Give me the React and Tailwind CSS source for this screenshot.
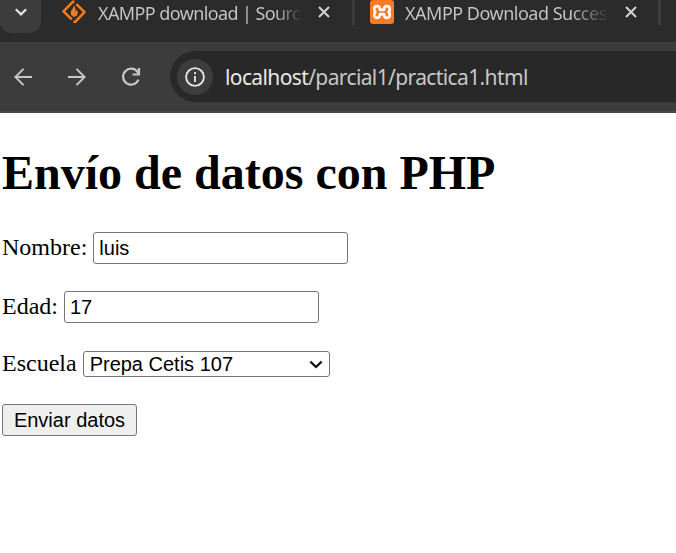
import React from "react";

const uiFont = "font-['Noto_Sans','Open_Sans',sans-serif]";
const formFont = "font-['Liberation_Sans',Arial,sans-serif]";

function CloseIcon() {
  return (
    <svg className="h-3 w-3 shrink-0" viewBox="0 0 12 12" fill="none" stroke="#d2d2d2" strokeWidth="2">
      <path d="M1 1 11 11M11 1 1 11" />
    </svg>
  );
}

function SourceForgeIcon() {
  return (
    <svg className="h-6 w-6 shrink-0" viewBox="0 0 24 24" fill="none">
      <path d="M12.5 1.8 10.8 1.8 1.5 11.4 9.7 19.3M14.3 4.2 22.5 12.1 13.2 21.8 11.4 21.8" stroke="#ff7b1a" strokeWidth="2.5" strokeLinejoin="round" />
      <path d="M11.8 5.2c.3 3-3 4.400-3 7.500 0 2.500 1.500 4 3.400 4 2 0 3.500-1.600 3.500-4 0-1.500-.7-2.800-1.300-3.400 0 1.500-.3 2.300-.9 2.700.3-2.500-.3-5.500-1.700-6.800Z" fill="#f47c20" />
    </svg>
  );
}

function XamppIcon() {
  return (
    <svg className="h-6 w-6 shrink-0" viewBox="0 0 24 24">
      <rect width="24" height="24" rx="3" fill="#fb7a24" />
      <path
        d="M5.300 12C3.600 10.600 3.700 6.200 7.200 6.200c2.200 0 2.700 1.500 2.800 3.600h4c.1-2.100.6-3.600 2.800-3.600 3.500 0 3.600 4.400 1.900 5.800 1.700 1.400 1.600 5.800-1.900 5.800-2.200 0-2.700-1.500-2.800-3.600h-4c-.1 2.100-.6 3.600-2.800 3.600-3.500 0-3.600-4.400-1.900-5.800Z"
        fill="none"
        stroke="#fff"
        strokeWidth="2.700"
        strokeLinejoin="round"
      />
    </svg>
  );
}

function TabStrip() {
  return (
    <div className="flex h-[42px] items-start bg-[#2b2b2b]">
      <div className="flex h-[33px] w-[41px] shrink-0 justify-center rounded-b-[12px] bg-[#3c3c3c] pt-[8px]">
        <svg className="h-2 w-3" viewBox="0 0 12 8" fill="none" stroke="#e3e3e3" strokeWidth="2.2">
          <path d="m.8 1.200 5.200 5.200 5.200-5.200" />
        </svg>
      </div>
      <div className="ml-[21px] flex h-6 w-[270px] items-center">
        <SourceForgeIcon />
        <span className={`ml-3 w-[208px] shrink-0 bg-linear-to-r from-[#c7c7c7] from-85% to-transparent to-98% bg-clip-text pt-[2px] text-[18px] leading-6 tracking-[-0.6px] whitespace-nowrap text-transparent ${uiFont}`}>
          XAMPP download | Sourc
        </span>
        <span className="ml-[12px] flex"><CloseIcon /></span>
      </div>
      <div className="ml-[20px] h-[25px] w-[3px] shrink-0 bg-[#3c3c3c]" />
      <div className="ml-[15px] flex h-6 w-[270px] items-center">
        <XamppIcon />
        <span className={`ml-[11px] w-[208px] shrink-0 bg-linear-to-r from-[#c7c7c7] from-80% to-transparent to-98% bg-clip-text pt-[2px] text-[18px] leading-6 tracking-[-0.5px] whitespace-nowrap text-transparent ${uiFont}`}>
          XAMPP Download Succes
        </span>
        <span className="ml-[12px] flex"><CloseIcon /></span>
      </div>
      <div className="ml-[18px] h-[25px] w-[3px] shrink-0 bg-[#3c3c3c]" />
    </div>
  );
}

function Toolbar() {
  return (
    <div className="flex h-[71px] items-start border-b-2 border-[#484848] bg-[#3c3c3c] pt-[9px]">
      <div className="flex h-[51px] w-[170px] shrink-0 items-center pl-[14px]">
        <svg className="h-[18px] w-[18px]" viewBox="0 0 18 18" fill="none" stroke="#c7c7c7" strokeWidth="2">
          <path d="M18 9H1.500M9.500.9 1.400 9l8.100 8.100" />
        </svg>
        <svg className="ml-9 h-[18px] w-[18px]" viewBox="0 0 18 18" fill="none" stroke="#c7c7c7" strokeWidth="2">
          <path d="M0 9h16.500M8.500.9 16.600 9l-8.100 8.100" />
        </svg>
        <svg className="ml-[35px] h-5 w-5" viewBox="0 0 20 20" fill="none" stroke="#c7c7c7" strokeWidth="2.200">
          <path d="M17.500 12.700a8 8 0 1 1-.9-7.700l1.200 1.700M18 1v6.500h-6.500" />
        </svg>
      </div>
      <div className="flex h-[51px] flex-1 items-center rounded-l-full bg-[#282828] pl-[7px]">
        <div className="flex h-9 w-9 items-center justify-center rounded-full bg-[#3c3c3c]">
          <svg className="h-5 w-5" viewBox="0 0 20 20" fill="none" stroke="#e3e3e3" strokeWidth="1.900">
            <circle cx="10" cy="10" r="8.900" />
            <path d="M10 9v6M10 5v2.200" />
          </svg>
        </div>
        <span className={`ml-[12px] text-[21px] leading-7 tracking-[-0.62px] whitespace-nowrap text-[#c7c7c7] ${uiFont}`}>
          <span className="text-[#e8e8e8]">localhost</span>/parcial1/practica1.html
        </span>
      </div>
    </div>
  );
}

function Field({ label, value }) {
  return (
    <label className="flex h-8 items-center">
      <span className="mr-[6px] pb-[2px]">{label}</span>
      <input
        type="text"
        defaultValue={value}
        className={`h-8 w-[255px] rounded-[3px] border border-[#767676] bg-white px-[5px] text-[20px] leading-6 text-black outline-none ${formFont}`}
      />
    </label>
  );
}

export default function App() {
  return (
    <div className="h-[553px] w-[676px] overflow-hidden bg-white">
      <TabStrip />
      <Toolbar />
      <main className="px-[2px] pt-8 font-['Liberation_Serif','Times_New_Roman',serif] text-[24px] leading-7 text-black">
        <h1 className="text-[48px] leading-[55px] font-bold whitespace-nowrap">Envío de datos con PHP</h1>
        <form className="mt-8 flex flex-col items-start" onSubmit={(e) => e.preventDefault()}>
          <Field label="Nombre:" value="luis" />
          <div className="mt-[27px]">
            <Field label="Edad:" value="17" />
          </div>
          <label className="mt-7 flex h-[26px] items-center">
            <span className="mr-[6px] pb-[2px]">Escuela</span>
            <span className="grid items-center">
              <select className={`col-start-1 row-start-1 h-[26px] w-[247px] appearance-none rounded-[3px] border border-[#767676] bg-white px-[6px] text-[20px] leading-6 text-black outline-none ${formFont}`}>
                <option>Prepa Cetis 107</option>
              </select>
              <svg className="pointer-events-none col-start-1 row-start-1 mr-[7px] h-[9px] w-[14px] justify-self-end" viewBox="0 0 15 10" fill="none" stroke="#101010" strokeWidth="2.500">
                <path d="m1.300 1.800 6.200 6 6.200-6" />
              </svg>
            </span>
          </label>
          <button className={`mt-[27px] h-8 w-[135px] rounded-[3px] border border-[#767676] bg-[#efefef] text-center text-[20px] leading-6 whitespace-nowrap text-black ${formFont}`}>
            Enviar datos
          </button>
        </form>
      </main>
    </div>
  );
}
